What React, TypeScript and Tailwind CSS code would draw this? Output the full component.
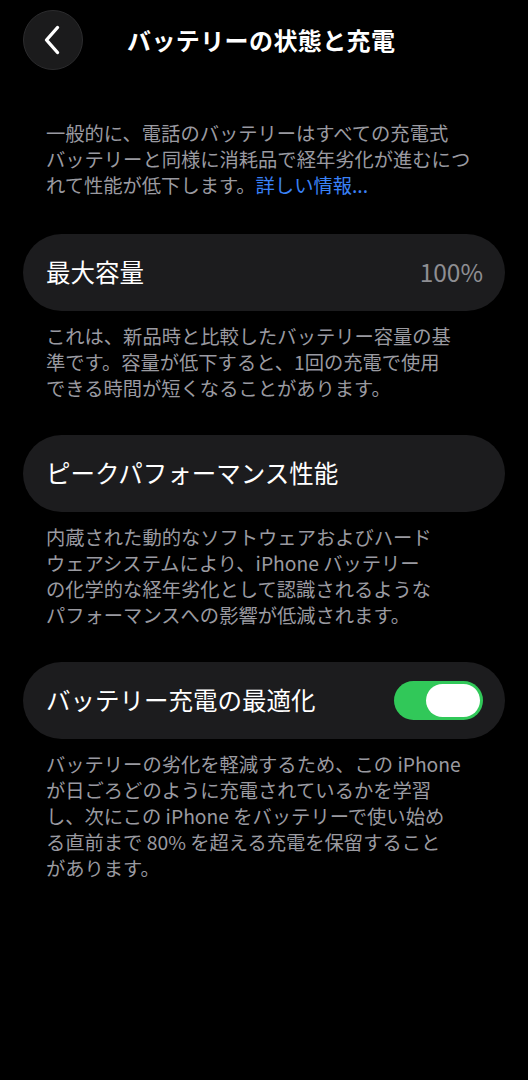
import React, { useState } from 'react';

const FONT = { fontFamily: '"Noto Sans CJK JP", "Noto Sans", sans-serif' };

// --- small pieces ---
function Note({ lines }: { lines: React.ReactNode[] }) {
  return (
    <div className="px-[46px] text-[19.3px] leading-[26px] text-[#9a9aa0] whitespace-nowrap">
      {lines.map((l, i) => (
        <div key={i}>{l}</div>
      ))}
    </div>
  );
}

function Row({ label, right }: { label: string; right?: React.ReactNode }) {
  return (
    <div className="mx-[23px] h-[77px] rounded-full bg-[#1c1c1e] pl-[23px] pr-[22px] flex items-center justify-between">
      <span className="text-[24.5px] text-white">{label}</span>
      {right}
    </div>
  );
}

function Toggle({ on, onChange }: { on: boolean; onChange: () => void }) {
  return (
    <button
      onClick={onChange}
      className={`w-[89px] h-[39px] rounded-full p-[3px] flex items-center ${on ? 'bg-[#31c859] justify-end' : 'bg-[#39393d] justify-start'}`}
    >
      <span className="block w-[54px] h-[33px] rounded-full bg-white" />
    </button>
  );
}

export default function App() {
  const [optimized, setOptimized] = useState(true);

  return (
    <div className="min-h-screen w-[528px] bg-black text-white" style={FONT}>
      {/* Header */}
      <header className="h-[80px] pt-[10px] flex items-start">
        <button className="ml-[23px] w-[60px] h-[60px] rounded-full bg-[#1b1b1c] border border-[#2c2c2e] flex items-center justify-center">
          <svg width="30" height="30" viewBox="0 0 30 30" fill="none" stroke="white" strokeWidth="3.4" strokeLinecap="round" strokeLinejoin="round">
            <path d="M19.5 2.5 L8.5 15 L19.5 27.5" />
          </svg>
        </button>
        <h1 className="ml-[44px] h-[60px] flex items-center text-[24px] font-semibold tracking-[0.4px]">バッテリーの状態と充電</h1>
      </header>

      {/* Intro */}
      <div className="pt-[40px]">
        <Note
          lines={[
            '一般的に、電話のバッテリーはすべての充電式',
            'バッテリーと同様に消耗品で経年劣化が進むにつ',
            <>れて性能が低下します。<span className="text-[#3a82f7]">詳しい情報...</span></>,
          ]}
        />
      </div>

      <div className="mt-[36px]">
        <Row label="最大容量" right={<span className="text-[24.5px] text-[#8e8e93]">100%</span>} />
      </div>
      <div className="mt-[12px]">
        <Note
          lines={[
            'これは、新品時と比較したバッテリー容量の基',
            '準です。容量が低下すると、1回の充電で使用',
            'できる時間が短くなることがあります。',
          ]}
        />
      </div>

      <div className="mt-[34px]">
        <Row label="ピークパフォーマンス性能" />
      </div>
      <div className="mt-[12px]">
        <Note
          lines={[
            '内蔵された動的なソフトウェアおよびハード',
            'ウェアシステムにより、iPhone バッテリー',
            'の化学的な経年劣化として認識されるような',
            'パフォーマンスへの影響が低減されます。',
          ]}
        />
      </div>

      <div className="mt-[34px]">
        <Row label="バッテリー充電の最適化" right={<Toggle on={optimized} onChange={() => setOptimized(!optimized)} />} />
      </div>
      <div className="mt-[12px]">
        <Note
          lines={[
            'バッテリーの劣化を軽減するため、この iPhone',
            'が日ごろどのように充電されているかを学習',
            'し、次にこの iPhone をバッテリーで使い始め',
            'る直前まで 80% を超える充電を保留すること',
            'があります。',
          ]}
        />
      </div>
    </div>
  );
}
